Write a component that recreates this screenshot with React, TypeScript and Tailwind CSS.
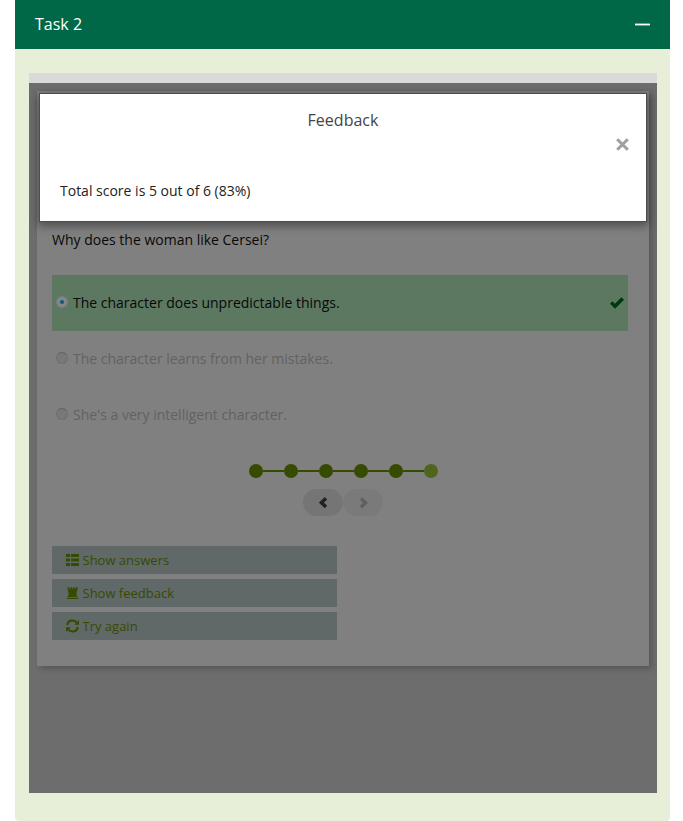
const sans = "font-['Open_Sans','Noto_Sans',sans-serif]";

function ListIcon() {
  return (
    <svg width="13" height="12" viewBox="0 0 13 12" fill="currentColor">
      <path d="M0 0h4v3H0zM5 0h8v3H5zM0 4.5h4v3H0zM5 4.5h8v3H5zM0 9h4v3H0zM5 9h8v3H5z" />
    </svg>
  );
}

function TowerIcon() {
  return (
    <svg width="13" height="12" viewBox="0 0 13 12" fill="currentColor">
      <path d="M1.6 0H3v1.4h1.6V0h1.3v1.4h1.4V0h1.3v1.4H10V0h1.5l-.2 4-.7 1v3L11.5 10H1.6l.9-2V5L1.8 4zM.8 10.8h11.6V12H.8z" />
    </svg>
  );
}

function RefreshIcon() {
  return (
    <svg width="13" height="14" viewBox="0 0 13 14" fill="none" stroke="currentColor" strokeWidth="2">
      <path d="M1.2 6C1.6 3.2 3.8 1.5 6.5 1.5c1.7 0 3.1.7 4.2 2.1M11.8 8c-.4 2.8-2.6 4.5-5.3 4.5-1.7 0-3.1-.7-4.2-2.1" />
      <path d="M13 1v4.7H8.3zM0 13V8.3h4.7z" fill="currentColor" stroke="none" />
    </svg>
  );
}

function Option({ label, checked = false }: { label: string; checked?: boolean }) {
  return (
    <div
      className={`flex h-14 w-[576px] items-center pl-1 pr-[4px] text-[14px] ${
        checked ? "bg-[#5c7861] text-[#080808]" : "text-[#626262]"
      }`}
    >
      <span
        className={`mb-[3px] mr-[5px] flex size-3 items-center justify-center rounded-full border ${
          checked ? "border-[#777f79] bg-[#858585]" : "border-[#6f6f6f] border-t-[#606060] bg-[#787878]"
        }`}
      >
        {checked && <span className="size-1 rounded-full bg-[#145880]" />}
      </span>
      <span className="flex-1 pb-[2px]">{label}</span>
      {checked && (
        <svg width="14" height="12" viewBox="0 0 14 12">
          <path d="M0 6.7 2.4 4.3 5 6.8 11.4.2 14 2.8 5.1 11.8z" fill="#00380f" />
        </svg>
      )}
    </div>
  );
}

const actions = [
  { label: "Show answers", Icon: ListIcon },
  { label: "Show feedback", Icon: TowerIcon },
  { label: "Try again", Icon: RefreshIcon },
];

export default function App() {
  return (
    <div className={`h-[821px] w-[683px] overflow-hidden bg-white ${sans}`}>
      <div className="ml-[15px] h-[821px] w-[655px] rounded-b-[4px] bg-[#e7efd8]">
        <header className="flex h-[49px] items-center justify-between bg-[#006847] pl-[20px] pr-5">
          <span className="pb-[2px] text-[16px] text-white">Task 2</span>
          <span className="h-[3px] w-[15px] border-y border-[#66a491] bg-white" />
        </header>
        <main className="px-[14px] pt-6">
          <div className="h-[10px] w-[628px] bg-[#dadada]" />
          <div className="relative h-[710px] w-[628px] overflow-hidden bg-[#6d6d6d] pl-2 pt-2">
            <section className="h-[575px] w-[612px] bg-[#808080] pl-[15px] pt-[139px] shadow-[3px_3px_6px_0px_rgba(0,0,0,0.2)]">
              <p className="h-[45px] text-[14px] leading-5 text-[#080808]">Why does the woman like Cersei?</p>
              <Option label="The character does unpredictable things." checked />
              <Option label="The character learns from her mistakes." />
              <Option label="She's a very intelligent character." />
              <div className="ml-[197px] mt-[21px] flex items-center">
                {[0, 1, 2, 3, 4].map((step) => (
                  <div key={step} className="flex items-center">
                    <span className="size-[14px] rounded-full bg-[#364b00]" />
                    <span className="h-[2px] w-[21px] bg-[#364b00]" />
                  </div>
                ))}
                <span className="size-[14px] rounded-full bg-[#4f651c]" />
              </div>
              <div className="ml-[251px] mt-[11px] flex">
                <span className="flex h-[27px] w-10 items-center justify-center rounded-full bg-[#757575] text-[#1e2226]">
                  <svg width="9" height="12" viewBox="0 0 9 12" fill="none" stroke="currentColor" strokeWidth="3.4">
                    <path d="M7 1.2 2.4 5.6 7 10" />
                  </svg>
                </span>
                <span className="flex h-[27px] w-10 items-center justify-center rounded-full bg-[#7a7a7a] text-[#606060]">
                  <svg width="9" height="12" viewBox="0 0 9 12" fill="none" stroke="currentColor" strokeWidth="3.4">
                    <path d="M2 1.4 6.6 5.8 2 10.2" />
                  </svg>
                </span>
              </div>
              <div className="mt-[30px] flex w-[285px] flex-col gap-[5px]">
                {actions.map(({ label, Icon }) => (
                  <div key={label} className="flex h-7 items-center gap-[3.5px] bg-[#606868] pl-[14px] text-[13px] text-[#364b00]">
                    <Icon />
                    <span className="pt-[2px]">{label}</span>
                  </div>
                ))}
              </div>
            </section>
            <section className="absolute left-[10px] top-[10px] h-[129px] w-[608px] border border-[#4c4c4c] bg-white shadow-[0_3px_9px_1px_rgba(0,0,0,0.4)]">
              <h2 className="pt-[14px] text-center text-[16px] leading-6 text-[#444444]">Feedback</h2>
              <div className="flex justify-end pr-[17px] pt-[6px]">
                <svg width="13" height="13" viewBox="0 0 13 13" stroke="#9f9f9f" strokeWidth="3">
                  <path d="M1.2 1.2 11.8 11.8M11.8 1.2 1.2 11.8" />
                </svg>
              </div>
              <p className="pl-5 pt-[30px] text-[14px] leading-5 text-[#222222]">Total score is 5 out of 6 (83%)</p>
            </section>
          </div>
        </main>
      </div>
    </div>
  );
}
